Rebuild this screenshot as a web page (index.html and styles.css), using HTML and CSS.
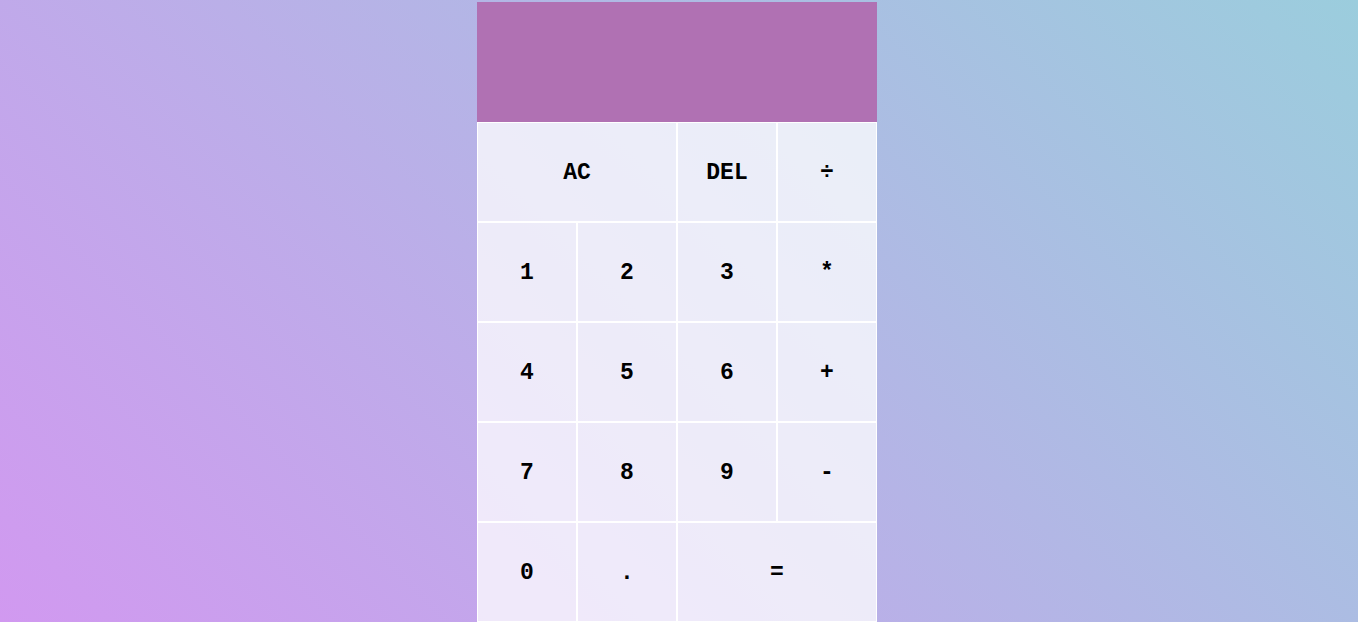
FILE: index.html
```html
<!DOCTYPE html>
<html lang="en">
<head>
<meta charset="utf-8">
<title>Calculator</title>
<link rel="stylesheet" href="styles.css">
</head>
<body>
<div class="calculator-grid">
  <div class="output"></div>
  <button class="span-two">AC</button>
  <button>DEL</button>
  <button>÷</button>
  <button>1</button>
  <button>2</button>
  <button>3</button>
  <button>*</button>
  <button>4</button>
  <button>5</button>
  <button>6</button>
  <button>+</button>
  <button>7</button>
  <button>8</button>
  <button>9</button>
  <button>-</button>
  <button>0</button>
  <button>.</button>
  <button class="span-two">=</button>
</div>
</body>
</html>
```
FILE: styles.css
```css
*, *::before, *::after {
  box-sizing: border-box;
}
html, body {
  margin: 0;
  padding: 0;
  height: 100%;
  overflow: hidden;
}
body {
  background: linear-gradient(45deg, #d199f0, #9bcddd);
  font-family: "Liberation Mono", monospace;
}
.calculator-grid {
  display: grid;
  justify-content: center;
  align-content: start;
  padding: 2px 4px 0 0;
  grid-template-columns: repeat(4, 100px);
  grid-template-rows: 120px repeat(5, 100px);
}
.output {
  grid-column: 1 / -1;
  background-color: #b071b3;
}
.calculator-grid > button {
  font-family: "Liberation Mono", monospace;
  font-weight: bold;
  font-size: 23px;
  color: #000;
  border: 1px solid #fff;
  outline: none;
  padding: 2px 0 0;
  background-color: rgba(255, 255, 255, 0.75);
}
.span-two {
  grid-column: span 2;
}
```
